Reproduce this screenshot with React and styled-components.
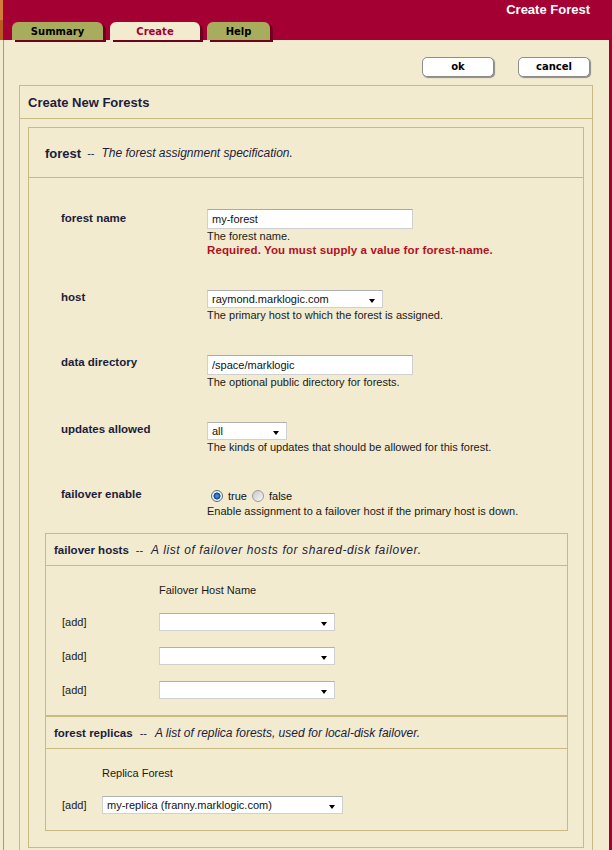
import styled, { createGlobalStyle } from 'styled-components';

const RED = '#a50034';
const CREAM = '#f2ebcf';
const TAN = '#c9b983';
const INK = '#1c1c3c';

const GlobalStyle = createGlobalStyle`
  html, body {
    margin: 0;
    padding: 0;
    background: ${CREAM};
  }
  body {
    font-family: "Liberation Sans", Arial, sans-serif;
    color: #1a1a1a;
  }
`;

const Page = styled.div`
  width: 612px;
  min-height: 850px;
  display: flex;
  flex-direction: column;
`;

const Header = styled.header`
  height: 40px;
  display: flex;
  flex-direction: column;
  background:
    linear-gradient(to bottom, #d27d38 0, #d27d38 20px, #b95c1f 20px) left top / 3px 100% no-repeat,
    ${RED};
`;

const Title = styled.h1`
  margin: 0;
  height: 22px;
  box-sizing: border-box;
  padding: 3px 22px 0 0;
  text-align: right;
  color: #fff;
  font: bold 13px/14px "Liberation Sans", Arial, sans-serif;
`;

const TabRow = styled.nav`
  display: flex;
  align-items: flex-end;
  gap: 7px;
  padding-left: 12px;
  height: 18px;
`;

const Tab = styled.div`
  width: ${p => p.$w}px;
  height: 18px;
  box-sizing: border-box;
  padding-top: 1px;
  border-radius: 6px 6px 0 0;
  background: ${p => (p.$active ? CREAM : '#a8ad5d')};
  box-shadow: 3px 2px 0 #6e0020;
  color: ${p => (p.$active ? RED : '#000')};
  font: bold 10px/18px "DejaVu Sans", Verdana, sans-serif;
  text-align: center;
`;

const Main = styled.main`
  flex: 1;
  margin-left: 3px;
  border-left: 1px solid #9c9c9c;
  border-right: 3px solid ${RED};
  padding-top: 17px;
  display: flex;
  flex-direction: column;
`;

const Toolbar = styled.div`
  display: flex;
  justify-content: flex-end;
  gap: 24px;
  padding-right: 19px;
`;

const Button = styled.button`
  width: 72px;
  height: 20px;
  padding: 0;
  background: #fff;
  border: 1px solid #8c8c8c;
  border-radius: 5px;
  box-shadow: 1px 1px 1px #8a8a8a;
  color: #000;
  font: bold 10px/18px "DejaVu Sans", Verdana, sans-serif;
`;

const Panel = styled.section`
  border: 1px solid ${TAN};
  ${p => p.$open && 'border-bottom: none;'}
  background: ${CREAM};
`;

const OuterPanel = styled(Panel)`
  margin: 8px 16px 0 15px;
  flex: 1;
`;

const PanelHead = styled.div`
  height: ${p => p.$h}px;
  box-sizing: border-box;
  display: flex;
  align-items: center;
  padding-left: ${p => p.$pad}px;
  padding-top: ${p => p.$nudge ?? 0}px;
  border-bottom: 1px solid ${TAN};
  color: ${INK};
`;

const PanelTitle = styled.span`
  font-weight: bold;
  font-size: ${p => p.$size}px;
`;

const Dashes = styled.span`
  margin: ${p => (p.$wide ? '0 8px 0 7px' : '0 7px 0 6px')};
  font-size: 11px;
`;

const Desc = styled.span`
  font-style: italic;
  font-size: 12px;
  letter-spacing: ${p => p.$track ?? 0}px;
`;

const OuterBody = styled.div`
  padding: 8px 8px 0 8px;
`;

const ForestBody = styled.div`
  padding: 0 15px 16px 16px;
`;

const FieldList = styled.div`
  display: flex;
  flex-direction: column;
  gap: 33px;
  padding: 31px 0 0 16px;
`;

const Field = styled.div`
  display: grid;
  grid-template-columns: 146px 1fr;
`;

const Label = styled.div`
  font-weight: bold;
  font-size: 11.5px;
  line-height: 14px;
  color: ${INK};
  padding-top: ${p => p.$top ?? 1}px;
`;

const Control = styled.div`
  display: flex;
  flex-direction: column;
  align-items: flex-start;
`;

const TextInput = styled.input`
  width: 206px;
  height: 20px;
  box-sizing: border-box;
  border: 1px solid #d0d0d0;
  border-top-color: #a9a9a9;
  background: #fff;
  padding: 0 4px;
  margin: 0;
  font: 11px "Liberation Sans", Arial, sans-serif;
  color: #111;
  outline: none;
`;

const SelectBox = styled.div`
  position: relative;
  width: ${p => p.$w}px;
  height: 18px;
  box-sizing: border-box;
  border: 1px solid #d0d0d0;
  border-top-color: #b0b0b0;
  background: #fff;
  padding-left: 4px;
  font-size: 11px;
  line-height: 16px;
  color: #111;

  &::after {
    content: '';
    position: absolute;
    right: 7px;
    top: 8px;
    border-left: 3.5px solid transparent;
    border-right: 3.5px solid transparent;
    border-top: 4px solid #000;
  }
`;

const Hint = styled.div`
  font-size: 11px;
  line-height: 14px;
  color: #1a1a1a;
`;

const Error = styled(Hint)`
  font-weight: bold;
  font-size: 11.5px;
  letter-spacing: 0.1px;
  color: #b3101e;
`;

const RadioRow = styled.div`
  display: flex;
  align-items: center;
  height: 17px;
  padding-left: 4px;
  font-size: 11px;
  color: #111;
`;

const Radio = styled.span`
  width: 12px;
  height: 12px;
  box-sizing: border-box;
  border-radius: 50%;
  border: 1px solid ${p => (p.$checked ? '#5a6c80' : '#9a9a9a')};
  margin-right: 5px;
  background: ${p =>
    p.$checked
      ? 'radial-gradient(circle at 50% 50%, #4aa0e8 0, #1d5fa6 2.5px, #0f3b70 3.2px, #e6ebf0 3.8px, #ffffff 6px)'
      : 'linear-gradient(135deg, #c8c8c8, #f8f8f8)'};
`;

const RadioText = styled.span`
  margin-right: ${p => p.$gap ?? 0}px;
`;

const SubPanel = styled(Panel)`
  ${p => p.$first && 'margin-top: 15px;'}
  ${p => !p.$first && 'border-top-width: 2px; margin-top: -1px;'}
`;

const SubGrid = styled.div`
  display: grid;
  grid-template-columns: ${p => p.$col}px 1fr;
  row-gap: 16px;
  align-items: center;
  padding: 17px 0 16px 16px;
  font-size: 11px;
  line-height: 14px;
  color: #1a1a1a;
`;

const ColHead = styled.div`
  grid-column: 2;
`;

const AddLink = styled.div`
  color: #1a1a1a;
`;

function SelectField({ width, value }) {
  return <SelectBox $w={width}>{value}</SelectBox>;
}

function FailoverRow({ value }) {
  return (
    <>
      <AddLink>[add]</AddLink>
      <SelectField width={176} value={value} />
    </>
  );
}

export default function App() {
  const failoverRows = ['', '', ''];

  return (
    <Page>
      <GlobalStyle />
      <Header>
        <Title>Create Forest</Title>
        <TabRow>
          <Tab $w={91}>Summary</Tab>
          <Tab $w={90} $active>Create</Tab>
          <Tab $w={63}>Help</Tab>
        </TabRow>
      </Header>

      <Main>
        <Toolbar>
          <Button>ok</Button>
          <Button>cancel</Button>
        </Toolbar>

        <OuterPanel $open>
          <PanelHead $h={33} $pad={8} $nudge={1}>
            <PanelTitle $size={13}>Create New Forests</PanelTitle>
          </PanelHead>

          <OuterBody>
            <Panel>
              <PanelHead $h={50} $pad={16} $nudge={1}>
                <PanelTitle $size={13}>forest</PanelTitle>
                <Dashes>--</Dashes>
                <Desc>The forest assignment specification.</Desc>
              </PanelHead>

              <ForestBody>
                <FieldList>
                  <Field>
                    <Label $top={2}>forest name</Label>
                    <Control>
                      <TextInput defaultValue="my-forest" />
                      <Hint>The forest name.</Hint>
                      <Error>Required. You must supply a value for forest-name.</Error>
                    </Control>
                  </Field>

                  <Field>
                    <Label $top={0}>host</Label>
                    <Control>
                      <SelectField width={176} value="raymond.marklogic.com" />
                      <Hint>The primary host to which the forest is assigned.</Hint>
                    </Control>
                  </Field>

                  <Field>
                    <Label $top={0}>data directory</Label>
                    <Control>
                      <TextInput defaultValue="/space/marklogic" />
                      <Hint>The optional public directory for forests.</Hint>
                    </Control>
                  </Field>

                  <Field>
                    <Label $top={0}>updates allowed</Label>
                    <Control>
                      <SelectField width={80} value="all" />
                      <Hint>The kinds of updates that should be allowed for this forest.</Hint>
                    </Control>
                  </Field>

                  <Field>
                    <Label $top={-2}>failover enable</Label>
                    <Control>
                      <RadioRow>
                        <Radio $checked />
                        <RadioText $gap={5}>true</RadioText>
                        <Radio />
                        <RadioText>false</RadioText>
                      </RadioRow>
                      <Hint>Enable assignment to a failover host if the primary host is down.</Hint>
                    </Control>
                  </Field>
                </FieldList>

                <SubPanel $first>
                  <PanelHead $h={32} $pad={8}>
                    <PanelTitle $size={11.5}>failover hosts</PanelTitle>
                    <Dashes $wide>--</Dashes>
                    <Desc $track={0.6}>A list of failover hosts for shared-disk failover.</Desc>
                  </PanelHead>
                  <SubGrid $col={97}>
                    <ColHead>Failover Host Name</ColHead>
                    {failoverRows.map((v, i) => (
                      <FailoverRow key={i} value={v} />
                    ))}
                  </SubGrid>
                </SubPanel>

                <SubPanel>
                  <PanelHead $h={32} $pad={8}>
                    <PanelTitle $size={11.5}>forest replicas</PanelTitle>
                    <Dashes $wide>--</Dashes>
                    <Desc>A list of replica forests, used for local-disk failover.</Desc>
                  </PanelHead>
                  <SubGrid $col={40}>
                    <ColHead>Replica Forest</ColHead>
                    <AddLink>[add]</AddLink>
                    <SelectField width={241} value="my-replica (franny.marklogic.com)" />
                  </SubGrid>
                </SubPanel>
              </ForestBody>
            </Panel>
          </OuterBody>
        </OuterPanel>
      </Main>
    </Page>
  );
}
